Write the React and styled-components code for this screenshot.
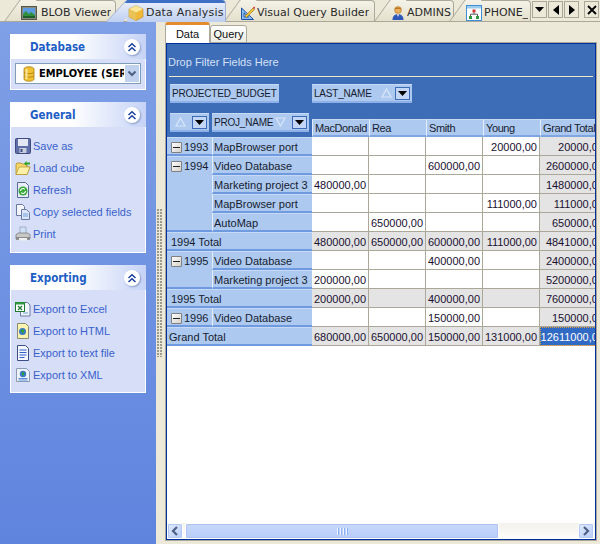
import React from 'react';
import styled, { createGlobalStyle } from 'styled-components';

const Global = createGlobalStyle`
  html, body { margin: 0; padding: 0; width: 600px; height: 544px; overflow: hidden; background: #ECE9D8; }
  * { box-sizing: border-box; }
  body { font-family: "Liberation Sans", Arial, sans-serif; font-size: 11px; color: #111; }
`;

const Root = styled.div`width: 600px; height: 544px; display: flex; flex-direction: column; overflow: hidden;`;
const TabStrip = styled.div`
  height: 22px; flex: none; display: flex; padding-left: 20px; background: #ECE9D8; border-bottom: 1px solid #ACA899; position: relative;
`;
const TabItem = styled.div`
  position: relative; flex: none; width: ${p => p.$w}px; margin-left: ${p => p.$gap || 0}px;
  height: ${p => p.$active ? 22 : 21}px; z-index: ${p => p.$active ? 3 : 1};
  display: flex; align-items: center; gap: ${p => p.$sp || 4}px; padding-left: ${p => p.$pad}px; padding-top: 3px;
  font-family: "DejaVu Sans", sans-serif; font-size: 11px; letter-spacing: ${p => p.$ls || 0}px; color: #2a2a2a; white-space: nowrap;
  background: ${p => p.$active ? 'linear-gradient(180deg,#3D6FC4 0,#3D6FC4 3px,#E6ECF9 3px,#BFCFF0 100%)' : 'linear-gradient(180deg,#F4F2E8,#E4E0CC)'};
  border-top: ${p => p.$active ? 'none' : '1px solid #ACA899'};
  border-right: 1px solid ${p => p.$active ? '#9FB2DA' : '#ACA899'};
  border-top-right-radius: 4px;
  &::before {
    content: ''; position: absolute; left: ${p => p.$active ? -11 : -8}px; top: ${p => p.$active ? 0 : -1}px; bottom: 0; width: 16px;
    background: ${p => p.$active ? 'linear-gradient(180deg,#3D6FC4 0,#3D6FC4 3px,#E6ECF9 3px,#BFCFF0 100%)' : 'linear-gradient(180deg,#F4F2E8,#E4E0CC)'};
    transform: skewX(${p => p.$active ? -43 : -36}deg);
    border-left: 1px solid ${p => p.$active ? '#9FB2DA' : '#ACA899'};
    z-index: -1;
  }
  & > * { position: relative; z-index: 1; }
`;
const TabLabel = styled.span`overflow: hidden; flex: 0 1 auto; min-width: 0;`;
const TabNav = styled.div`
  position: absolute; right: 1px; top: 1px; display: flex; gap: 1px; background: #ECE9D8; height: 20px; padding-left: 1px;
`;
const NavBtn = styled.div`
  width: 15px; height: 17px; margin-left: ${p => p.$gap || 0}px; border: 1px solid #ACA899; background: #ECE9D8; display: flex; align-items: center; justify-content: center;
`;
const Main = styled.div`flex: 1; display: flex; min-height: 0;`;
const Sidebar = styled.div`
  width: 156px; flex: none; padding: 12px 10px 0; display: flex; flex-direction: column; gap: 12px;
  background: linear-gradient(180deg,#7FA0E6,#5F84DE);
`;
const Panel = styled.section`
  border: 1px solid #fff; border-top: none; background: #D6DFF7; display: flex; flex-direction: column;
`;
const PanelHead = styled.header`
  height: 25px; flex: none; display: flex; align-items: center; justify-content: space-between; padding: 0 6px 0 20px;
  background: linear-gradient(90deg,#fff 0,#fff 45%,#C6D3F6 100%);
  font-family: "DejaVu Sans", sans-serif; font-stretch: condensed; font-weight: 700; font-size: 11.5px; color: #215DC6; margin: 0 -1px;
`;
const Chevron = styled.div`
  width: 16px; height: 16px; border-radius: 50%; background: #fff; box-shadow: 1px 1px 2px #8a9cc8; display: flex; align-items: center; justify-content: center;
`;
const PanelBody = styled.div`
  padding: ${p => p.$pad || '8px 0 8px'}; display: flex; flex-direction: column;
`;
const Combo = styled.div`
  margin: 4px 4px 5px; height: 21px; border: 1px solid #7F9DB9; background: #fff; display: flex; align-items: center; padding-left: 5px; gap: 2px; overflow: hidden;
  font-family: "DejaVu Sans", sans-serif; font-stretch: condensed; font-weight: 700; font-size: 11px; color: #000; white-space: nowrap; position: relative;
`;
const ComboBtn = styled.div`
  position: absolute; right: 0; top: 0; bottom: 0; width: 16px; background: #C1D2EE; border: 1px solid #fff; display: flex; align-items: center; justify-content: center;
`;
const Item = styled.div`
  height: 22px; display: flex; align-items: center; gap: 2px; padding-left: 4px; color: #3A5FCD; font-size: 11px; white-space: nowrap;
`;
const Splitter = styled.div`
  width: 9px; flex: none; background: #ECE9D8; display: flex; align-items: center; justify-content: center;
`;
const Grip = styled.div`
  width: 6px; height: 148px; margin-left: -2px;
  background-image: radial-gradient(circle at 1px 1px,#9c9a8c 0,#9c9a8c 1px,transparent 1.1px), radial-gradient(circle at 1px 1px,#b9b7a8 0,#b9b7a8 1px,transparent 1.1px);
  background-size: 3px 3px; background-position: 0 0, 3px 0;
`;
const Content = styled.div`flex: 1; display: flex; flex-direction: column; min-width: 0; padding-right: 3px; padding-bottom: 3px;`;
const SubTabs = styled.div`height: 21px; flex: none; display: flex; align-items: flex-end; position: relative; z-index: 2; margin-bottom: -1px;`;
const SubTab = styled.div`
  width: ${p => p.$w}px; height: ${p => p.$active ? 21 : 18}px; display: flex; align-items: center; justify-content: center; font-size: 11px; color: #111;
  background: ${p => p.$active ? '#fff' : 'linear-gradient(180deg,#fff,#ECEBE2)'};
  border: 1px solid #ACA899; border-bottom: ${p => p.$active ? 'none' : '1px solid #ACA899'};
  border-top: ${p => p.$active ? '3px solid #E68B2C' : '1px solid #ACA899'}; border-radius: 3px 3px 0 0;
`;
const Frame = styled.div`
  flex: 1; min-height: 0; border: 1px solid #ACA899; background: #fff; display: flex;
`;
const Inner = styled.div`
  flex: 1; min-width: 0; border: 1px solid #00309C; background: #fff; display: flex; flex-direction: column; overflow: hidden;
`;
const BlueArea = styled.div`
  height: 93px; flex: none; background: #3E6DB8; display: flex; flex-direction: column;
`;
const DropLabel = styled.div`
  height: 32px; flex: none; display: flex; align-items: center; padding: 4px 0 0 1px; color: #D5E0F6; font-size: 11px;
`;
const Rule = styled.div`height: 1px; flex: none; margin: 0 2px; background: #EFE8CF;`;
const FieldRow = styled.div`display: flex; padding: 7px 0 0 3px; gap: 33px; flex: none;`;
const FieldBtn = styled.div`
  height: 19px; width: ${p => p.$w}px; display: flex; align-items: center; padding: 0 2px; flex: none;
  background: #ADC9EF; border-top: 1px solid #C6DAF5; border-bottom: 2px solid #8DB1E8;
  font-size: 10px; letter-spacing: -.2px; color: #161c30; white-space: nowrap;
`;
const FieldDrop = styled.div`
  width: 15px; height: 13px; margin-left: auto; background: #C3D6F5; border: 1px solid #3B6AB7; display: flex; align-items: center; justify-content: center; flex: none;
`;
const SortMark = styled.span`margin-left: ${p => p.$m || 9}px; display: flex;`;
const HeadRow = styled.div`
  display: grid; grid-template-columns: 145px 57px 57px 57px 57px 67px; height: 34px; flex: none; align-items: end; padding-top: 10px;
`;
const RowFields = styled.div`display: flex; gap: 3px; padding: 0 0 5px 3px; align-self: start;`;
const ColHead = styled.div`
  height: 18px; background: #ADC9EF; border-left: 1px solid #E2ECFA; border-top: 1px solid #C6DAF5; border-bottom: 2px solid #7FA6E2; padding-left: 2px;
  font-size: 11px; letter-spacing: -.4px; color: #161c30; display: flex; align-items: center; white-space: nowrap; overflow: hidden;
`;
const Pivot = styled.div`
  display: grid; grid-template-columns: 45px 100px 57px 57px 57px 57px 67px; grid-auto-rows: 19px; flex: none;
`;
const YearCell = styled.div`
  grid-row: span ${p => p.$span || 1}; background: #ADC9EF; border-top: 1px solid #C6DAF5; border-bottom: 2px solid #6F9ADF; display: flex; align-items: flex-start; padding: 3px 0 0 4px; gap: 2px; font-size: 11px; line-height: 13px; color: #161c30;
`;
const MinusBox = styled.div`
  width: 11px; height: 11px; flex: none; margin-top: 1px; border: 1px solid #808080; border-radius: 1px; background: linear-gradient(135deg,#fff,#D4D0C8); display: flex; align-items: center; justify-content: center;
  &::after { content: ''; width: 7px; height: 1px; background: #222; }
`;
const RowLabel = styled.div`
  background: #ADC9EF; border-left: 1px solid #E2ECFA; border-top: 1px solid #C6DAF5; border-bottom: 2px solid #6F9ADF; padding: 1px 0 0 1px; display: flex; align-items: center; font-size: 11px; color: #161c30; white-space: nowrap; overflow: hidden;
`;
const TotalLabel = styled.div`
  grid-column: span 2; background: #ADC9EF; border-top: 1px solid #C6DAF5; border-bottom: 2px solid #6F9ADF; padding: 1px 0 0 ${p => p.$pad}px; display: flex; align-items: center; font-size: 11px; color: #161c30;
`;
const DataCell = styled.div`
  background: ${p => p.$sel ? '#316AC5' : p.$gray ? '#E4E4E4' : '#fff'}; color: ${p => p.$sel ? '#fff' : '#1a1030'};
  border-right: 1px solid #ACA899; border-bottom: 1px solid #ACA899; ${p => p.$sel ? 'outline: 1px dotted #E0A040; outline-offset: -1px;' : ''}
  padding: 1px 2px 0 0; display: flex; align-items: center; justify-content: flex-end; font-size: 11px; white-space: nowrap; overflow: hidden;
`;
const Spacer = styled.div`flex: 1; background: #fff;`;
const ScrollBar = styled.div`
  height: 16px; flex: none; display: flex; align-items: stretch; background: linear-gradient(180deg,#F3F1EC,#FEFEFB); padding: 0 1px 0 0; gap: 2px;
`;
const ScrollBtn = styled.div`
  width: 16px; flex: none; background: linear-gradient(135deg,#E1EAFE,#B8CCF6); border: 1px solid #fff; border-radius: 2px; box-shadow: inset 0 0 0 1px #B4C8F6; display: flex; align-items: center; justify-content: center;
`;
const Thumb = styled.div`
  width: 314px; flex: none; background: linear-gradient(180deg,#C9D8FC,#B8CDF9); border: 1px solid #fff; border-radius: 2px; box-shadow: inset 0 0 0 1px #AEC3F4; display: flex; align-items: center; justify-content: center; gap: 1px;
  span { width: 1px; height: 7px; background: #EEF4FE; box-shadow: 1px 0 0 #8CB0F8; margin-right: 1px; }
`;
const Track = styled.div`flex: 1;`;

const S = ({ children, s = 16, vb = '0 0 16 16' }) => <svg width={s} height={s} viewBox={vb} style={{ flex: 'none', display: 'block' }}>{children}</svg>;

const IcoBlob = () => <S><rect x=".5" y="1.5" width="15" height="13" fill="#8a8a80" stroke="#55584f" /><rect x="2" y="3" width="12" height="10" fill="#5C9BE0" /><path d="M2 13V9l3-3 3 3 2-2 4 3v3z" fill="#2F8F3B" /><rect x="2" y="11" width="12" height="2" fill="#1B5E2A" /></S>;
const IcoCube = () => <S><path d="M8 .8 15 4v8l-7 3.4L1 12V4z" fill="#F0B93A" stroke="#B98A1E" strokeWidth=".6" /><path d="M8 .8 15 4 8 7.4 1 4z" fill="#FCE69A" /><path d="M8 7.4V15.4L1 12V4z" fill="#E9C257" /></S>;
const IcoDraft = () => <S><path d="M1.5 14.5V3l12 11.5z M4 12h4.5L4 7.8z" fill="#8CC0F0" fillRule="evenodd" stroke="#1E4FA8" strokeWidth="1" /><path d="M5 11 13 3l1.5 1.5-8 8z" fill="#F2C230" stroke="#7A5A10" strokeWidth=".5" /><path d="M13 3l1-1.5 1 1-.5 1.5z" fill="#D02020" /></S>;
const IcoUser = () => <S><circle cx="8" cy="5" r="3.4" fill="#EDB15E" stroke="#A86E22" strokeWidth=".6" /><path d="M4.6 4.6C5 1.8 11 1.8 11.4 4.6 10 3.6 6 3.6 4.6 4.6z" fill="#B06A18" /><path d="M2.5 15c0-4 2-5.8 5.5-5.8s5.5 1.8 5.5 5.8z" fill="#2E57B8" /><path d="M7 9.2h2L8 12z" fill="#fff" /></S>;
const IcoHier = () => <S><rect x=".5" y=".5" width="15" height="15" fill="#fff" stroke="#3E8FD8" /><rect x="1" y="1" width="14" height="2.5" fill="#9CCBF0" /><rect x="6.5" y="4.5" width="3" height="3" fill="#D83030" /><path d="M8 7.5V9M4.5 11V9.2h7V11" stroke="#333" strokeWidth=".8" fill="none" /><rect x="3" y="11" width="3" height="3" fill="#2C9A3C" /><rect x="10" y="11" width="3" height="3" fill="#2C9A3C" /></S>;
const IcoDb = () => <S><path d="M3 3c0-3 10-3 10 0v10c0 3-10 3-10 0z" fill="#F0C030" stroke="#A87F18" strokeWidth=".8" /><path d="M3 6.5c1.5 1.6 8.500 1.600 10 0M3 10c1.5 1.6 8.500 1.600 10 0" fill="none" stroke="#A87F18" strokeWidth=".8" /><rect x="4.500" y="3" width="2" height="10" fill="#FBE69A" /></S>;
const IcoSave = () => <S><rect x=".5" y=".5" width="15" height="15" rx="1" fill="#5F6EA8" stroke="#3E4A80" /><rect x="3" y="1" width="10" height="7" fill="#E4E8F4" /><rect x="4.500" y="10" width="7" height="5" fill="#C9CEDD" /><rect x="5.500" y="11" width="2" height="3" fill="#3E4A80" /></S>;
const IcoFolder = () => <S><path d="M1 14.500V4l1-1h4l1 1h5v3H15l-3 7.500z" fill="#F8D868" stroke="#A88A28" strokeWidth=".8" /><path d="M1 14.500 4 7h11l-3 7.500z" fill="#FCEFA8" stroke="#A88A28" strokeWidth=".6" /><path d="M9 3.500 11.500 1v1.500H15v2h-3.500V6z" fill="#2FA52F" /></S>;
const IcoPageRefresh = () => <S><path d="M2.500.500h8l3 3v12h-11z" fill="#E8EEFB" stroke="#5A6A9A" /><circle cx="8" cy="9" r="4.500" fill="#38A838" /><path d="M5.500 9a2.500 2.500 0 0 1 4.300-1.700M10.500 9a2.500 2.500 0 0 1-4.300 1.700" stroke="#fff" strokeWidth="1.100" fill="none" /></S>;
const IcoCopy = () => <S><path d="M1.500.500h6l2 2v9h-8z" fill="#F4F6FC" stroke="#6A7AA8" /><path d="M6.500 5.500h5l3 3v7h-8z" fill="#DCE6F8" stroke="#6A7AA8" /><path d="M8 10h5M8 12h5" stroke="#6FA0E0" /></S>;
const IcoPrint = () => <S><rect x="5" y="1" width="6" height="7" fill="#CFE0F6" stroke="#8A9AB8" strokeWidth=".7" /><path d="M1 8.500 3.500 7h9L15 8.500V13H1z" fill="#C8C8C8" stroke="#707070" strokeWidth=".7" /><rect x="1" y="11" width="14" height="2.800" fill="#8A8A8A" /><rect x="4" y="12" width="8" height="2.500" fill="#F0F0F0" /></S>;
const IcoExcel = () => <S><path d="M5.500 1.500h7l2.500 2.500v11h-9.500z" fill="#F2F5FC" stroke="#6A7AA8" /><rect x=".5" y="1.500" width="9" height="9" fill="#fff" stroke="#1F7A2F" /><rect x=".5" y="1.500" width="9" height="2" fill="#2F9A3F" /><path d="M3 5l4 4M7 5l-4 4" stroke="#1F7A2F" strokeWidth="1.200" /><path d="M8 12h5" stroke="#6FA0E0" /></S>;
const IcoHtml = () => <S><path d="M2.500.500h8l3 3v12h-11z" fill="#FBF3B0" stroke="#8A8A70" /><circle cx="7.500" cy="8.500" r="3.500" fill="#3A78C8" /><path d="M5.500 7.500l2-1.500 2 2-2 3-.500-2z" fill="#2FA52F" /></S>;
const IcoText = () => <S><path d="M2.500.500h8l3 3v12h-11z" fill="#F4F7FE" stroke="#3A4E88" /><path d="M4.500 5h7M4.500 7.500h7M4.500 10h7M4.500 12.500h5" stroke="#2F5FC8" strokeWidth="1" /></S>;
const IcoXml = () => <S><path d="M1.500 1.500h10l3 3v10h-13z" fill="#EEF2FB" stroke="#8A9AB8" /><circle cx="8" cy="7" r="3.200" fill="#3A78C8" /><path d="M6.500 6l1.500-1 1.500 1.500L8 9z" fill="#2FA52F" /><path d="M3.500 11.500h9M3.500 13h9" stroke="#5A8FD8" /></S>;

const Chev2 = () => <svg width="10" height="10" viewBox="0 0 10 10"><path d="M1.500 5 5 1.800 8.500 5M1.500 9 5 5.800 8.500 9" fill="none" stroke="#1A3F9C" strokeWidth="1.500" /></svg>;
const Tri = ({ d = 'down', c = '#000' }) => {
  const m = { down: 'M0 0h9L4.500 5z', left: 'M6 0v10L0 5z', right: 'M0 0v10l6-5z' };
  const w = d === 'down' ? 9 : 6, h = d === 'down' ? 5 : 10;
  return <svg width={w} height={h} viewBox={`0 0 ${w} ${h}`} style={{ display: 'block' }}><path d={m[d]} fill={c} /></svg>;
};
const Close = () => <svg width="10" height="10" viewBox="0 0 10 10"><path d="M1 1l8 8M9 1 1 9" stroke="#000" strokeWidth="1.800" /></svg>;
const SortUp = () => <svg width="11" height="10" viewBox="0 0 11 10"><path d="M5.500 1 10 9H1z" fill="none" stroke="#D9E6FA" strokeWidth="1.200" /></svg>;
const SortDown = () => <svg width="11" height="10" viewBox="0 0 11 10"><path d="M5.500 9 10 1H1z" fill="none" stroke="#D9E6FA" strokeWidth="1.200" /></svg>;
const SideArrow = ({ right }) => <svg width="8" height="10" viewBox="0 0 8 10"><path d={right ? 'M2 1l4 4-4 4' : 'M6 1 2 5l4 4'} fill="none" stroke="#4D6185" strokeWidth="2.200" /></svg>;
const ComboChev = () => <svg width="10" height="8" viewBox="0 0 10 8"><path d="M1.500 1.500 5 5l3.500-3.500" fill="none" stroke="#4D6185" strokeWidth="2" /></svg>;

const rows = [
  { y: '1993', span: 1, l: 'MapBrowser port', v: ['', '', '', '20000,00', '20000,00'] },
  { y: '1994', span: 4, l: 'Video Database', v: ['', '', '600000,00', '', '2600000,00'] },
  { l: 'Marketing project 3', v: ['480000,00', '', '', '', '1480000,00'] },
  { l: 'MapBrowser port', v: ['', '', '', '111000,00', '111000,00'] },
  { l: 'AutoMap', v: ['', '650000,00', '', '', '650000,00'] },
  { t: '1994 Total', pad: 4, v: ['480000,00', '650000,00', '600000,00', '111000,00', '4841000,00'] },
  { y: '1995', span: 2, l: 'Video Database', v: ['', '', '400000,00', '', '2400000,00'] },
  { l: 'Marketing project 3', v: ['200000,00', '', '', '', '5200000,00'] },
  { t: '1995 Total', pad: 4, v: ['200000,00', '', '400000,00', '', '7600000,00'] },
  { y: '1996', span: 1, l: 'Video Database', v: ['', '', '150000,00', '', '150000,00'] },
  { t: 'Grand Total', pad: 2, v: ['680000,00', '650000,00', '150000,00', '131000,00', '12611000,00'], grand: true },
];

const PanelBox = ({ title, children }) => (
  <Panel>
    <PanelHead>{title}<Chevron><Chev2 /></Chevron></PanelHead>
    {children}
  </Panel>
);

export default function App() {
  return (
    <Root>
      <Global />
      <TabStrip>
        <TabItem $w={96} $pad={1}><IcoBlob /><TabLabel>BLOB Viewer</TabLabel></TabItem>
        <TabItem $w={99} $gap={11} $pad={1} $sp={2} $ls={0.2} $active><IcoCube /><TabLabel>Data Analysis</TabLabel></TabItem>
        <TabItem $w={135} $gap={14} $pad={0} $sp={1}><IcoDraft /><TabLabel>Visual Query Builder</TabLabel></TabItem>
        <TabItem $w={64} $gap={15} $pad={-2} $sp={1}><IcoUser /><TabLabel>ADMINS</TabLabel></TabItem>
        <TabItem $w={66} $gap={11} $pad={1} $sp={2}><IcoHier /><TabLabel>PHONE_</TabLabel></TabItem>
        <TabNav>
          <NavBtn><Tri /></NavBtn>
          <NavBtn><Tri d="left" /></NavBtn>
          <NavBtn><Tri d="right" /></NavBtn>
          <NavBtn $gap={4}><Close /></NavBtn>
        </TabNav>
      </TabStrip>
      <Main>
        <Sidebar>
          <PanelBox title="Database">
            <Combo><IcoDb />EMPLOYEE (SERVER)<ComboBtn><ComboChev /></ComboBtn></Combo>
          </PanelBox>
          <PanelBox title="General">
            <PanelBody $pad="8px 0 7px">
              <Item><IcoSave />Save as</Item>
              <Item><IcoFolder />Load cube</Item>
              <Item><IcoPageRefresh />Refresh</Item>
              <Item><IcoCopy />Copy selected fields</Item>
              <Item><IcoPrint />Print</Item>
            </PanelBody>
          </PanelBox>
          <PanelBox title="Exporting">
            <PanelBody $pad="8px 0 6px">
              <Item><IcoExcel />Export to Excel</Item>
              <Item><IcoHtml />Export to HTML</Item>
              <Item><IcoText />Export to text file</Item>
              <Item><IcoXml />Export to XML</Item>
            </PanelBody>
          </PanelBox>
        </Sidebar>
        <Splitter><Grip /></Splitter>
        <Content>
          <SubTabs>
            <SubTab $w={45} $active>Data</SubTab>
            <SubTab $w={37}>Query</SubTab>
          </SubTabs>
          <Frame>
            <Inner>
              <BlueArea>
                <DropLabel>Drop Filter Fields Here</DropLabel>
                <Rule />
                <FieldRow>
                  <FieldBtn $w={109}>PROJECTED_BUDGET</FieldBtn>
                  <FieldBtn $w={100}>LAST_NAME<SortMark $m={9}><SortUp /></SortMark><FieldDrop><Tri /></FieldDrop></FieldBtn>
                </FieldRow>
                <HeadRow>
                  <RowFields>
                    <FieldBtn $w={39}><SortMark $m={3}><SortUp /></SortMark><FieldDrop><Tri /></FieldDrop></FieldBtn>
                    <FieldBtn $w={97}>PROJ_NAME<SortMark $m={2}><SortDown /></SortMark><FieldDrop><Tri /></FieldDrop></FieldBtn>
                  </RowFields>
                  <ColHead>MacDonald</ColHead>
                  <ColHead>Rea</ColHead>
                  <ColHead>Smith</ColHead>
                  <ColHead>Young</ColHead>
                  <ColHead>Grand Total</ColHead>
                </HeadRow>
              </BlueArea>
              <Pivot>
                {rows.map((r, i) => (
                  <React.Fragment key={i}>
                    {r.t ? <TotalLabel $pad={r.pad}>{r.t}</TotalLabel> : null}
                    {r.y ? <YearCell $span={r.span}><MinusBox />{r.y}</YearCell> : null}
                    {r.l ? <RowLabel>{r.l}</RowLabel> : null}
                    {r.v.map((val, j) => (
                      <DataCell key={j} $gray={!!r.t || j === 4} $sel={r.grand && j === 4}>{val}</DataCell>
                    ))}
                  </React.Fragment>
                ))}
              </Pivot>
              <Spacer />
              <ScrollBar>
                <ScrollBtn><SideArrow /></ScrollBtn>
                <Thumb><span /><span /><span /><span /></Thumb>
                <Track />
                <ScrollBtn><SideArrow right /></ScrollBtn>
              </ScrollBar>
            </Inner>
          </Frame>
        </Content>
      </Main>
    </Root>
  );
}
